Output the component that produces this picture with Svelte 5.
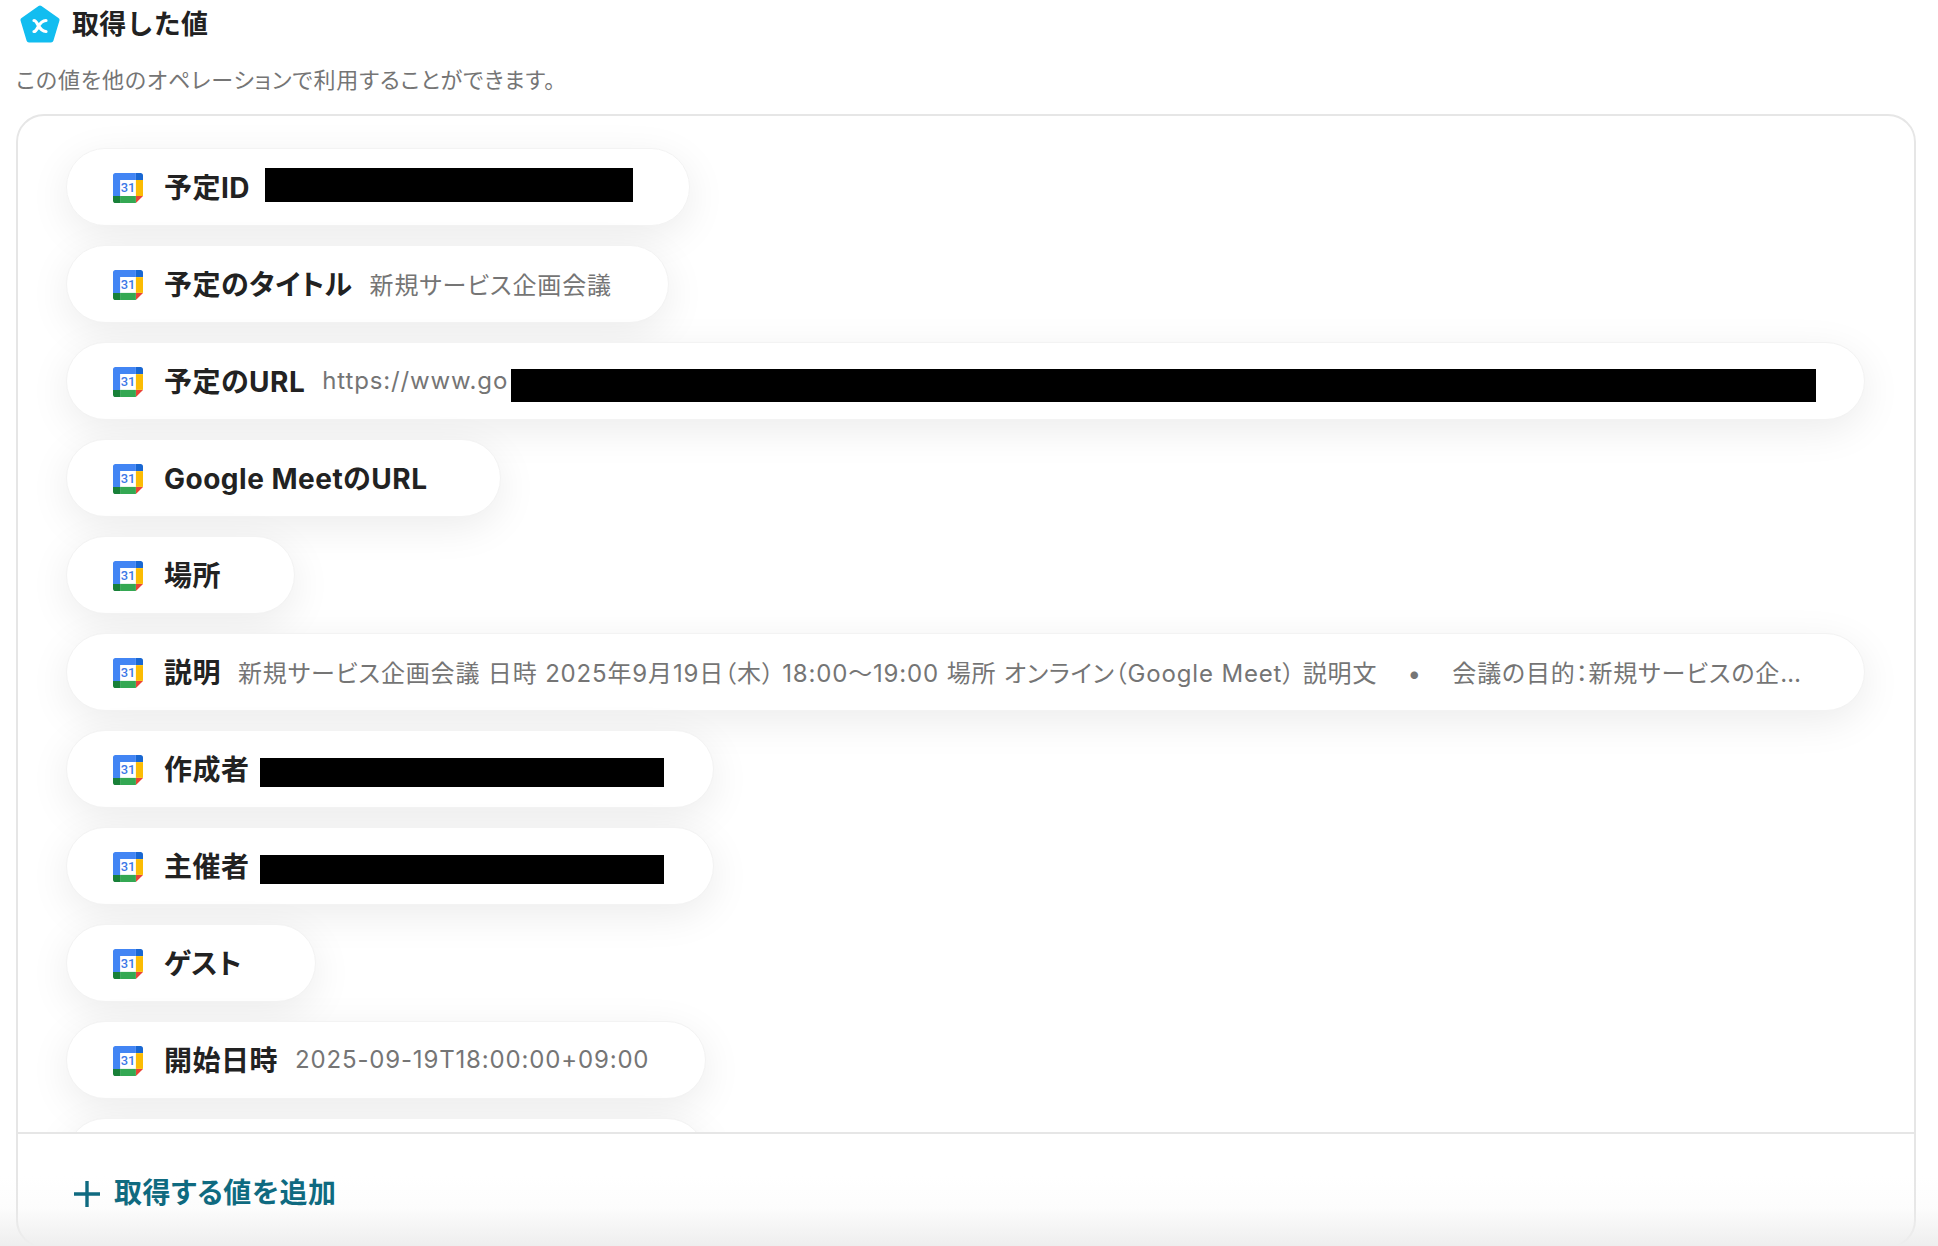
<script>
  const rows = [
    { label: '予定ID', mask: 'id' },
    { label: '予定のタイトル', value: '新規サービス企画会議' },
    { label: '予定のURL', value: 'https://www.go', mask: 'url', wide: true },
    { label: 'Google MeetのURL', value: '' },
    { label: '場所', value: '' },
    {
      label: '説明',
      value: '新規サービス企画会議 日時 2025年9月19日（木） 18:00〜19:00 場所 オンライン（Google Meet） 説明文 \u00a0\u00a0\u00a0•\u00a0\u00a0\u00a0 会議の目的：新規サービスの企画内容について検討し、今後の方向性を決定する',
      wide: true
    },
    { label: '作成者', mask: 'mail' },
    { label: '主催者', mask: 'mail' },
    { label: 'ゲスト', value: '' },
    { label: '開始日時', value: '2025-09-19T18:00:00+09:00' },
    { label: '終了日時', value: '2025-09-19T19:00:00+09:00' }
  ];
</script>

{#snippet calendar()}
  <svg class="cal" viewBox="0 0 200 200" aria-hidden="true">
    <path fill="#fff" d="M152.6 47.4H47.4v105.2h105.2z" />
    <path fill="#EA4335" d="M152.6 200L200 152.6h-47.4z" />
    <path fill="#FBBC04" d="M200 47.4h-47.4v105.2H200z" />
    <path fill="#34A853" d="M152.6 152.6H47.4V200h105.2z" />
    <path fill="#188038" d="M0 152.6v31.6C0 192.9 7.1 200 15.8 200h31.6v-47.4z" />
    <path fill="#1967D2" d="M200 47.4V15.8C200 7.1 192.9 0 184.2 0h-31.6v47.4z" />
    <path fill="#4285F4" d="M152.6 0H15.8C7.1 0 0 7.1 0 15.8v136.8h47.4V47.4h105.2z" />
    <text x="100" y="128" text-anchor="middle" class="cal-num">31</text>
  </svg>
{/snippet}

<div class="page">
  <header class="head">
    <svg class="logo" viewBox="0 0 40 38" aria-hidden="true">
      <path fill="#12bdf0" stroke="#12bdf0" stroke-width="5" stroke-linejoin="round" d="M20 3L37 15L31 35H9L3 15z" />
      <path fill="none" stroke="#fff" stroke-width="3.2" stroke-linecap="round" d="M14 15.5c4 0 4 11 12 11M26 15.5c-8 0-8 11-12 11" />
    </svg>
    <h1>取得した値</h1>
  </header>
  <p class="sub">この値を他のオペレーションで利用することができます。</p>

  <section class="card">
    <div class="list">
      {#each rows as r}
        <div class="pill" class:wide={r.wide}>
          {@render calendar()}
          <span class="label">{r.label}</span>
          {#if r.mask === 'url'}
            <span class="value url">{r.value}</span><i class="mask m-url"></i>
          {:else if r.mask}
            <i class="mask m-{r.mask}"></i>
          {:else}
            <span class="value">{r.value}</span>
          {/if}
        </div>
      {/each}
    </div>
    <div class="foot">
      <svg class="plus" viewBox="0 0 26 26" aria-hidden="true">
        <path d="M13 0v26M0 13h26" stroke="#0f6a80" stroke-width="3.4" fill="none" />
      </svg>
      <span>取得する値を追加</span>
    </div>
  </section>
  <div class="fade"></div>
</div>

<style>
  :global(body) { background: #fff; }
  .page {
    position: relative;
    height: 1246px;
    overflow: hidden;
    padding: 0 22px 0 16px;
    box-sizing: border-box;
    background: #fff;
    color: #222;
    font-family: Inter, "Noto Sans CJK JP", sans-serif;
    font-feature-settings: "palt";
  }
  .head { display: flex; align-items: center; gap: 12px; height: 48px; padding-left: 4px; }
  .logo { width: 40px; height: 38px; flex: none; }
  h1 { margin: 0; font-size: 27px; font-weight: 700; line-height: 1; font-feature-settings: normal; letter-spacing: .01em; }
  .sub { margin: 16px 0 0; height: 32px; font-size: 22px; line-height: 32px; letter-spacing: .85px; color: #757575; }
  .card {
    margin-top: 18px;
    height: 1134px;
    box-sizing: border-box;
    border: 2px solid #e6e6e6;
    border-radius: 28px;
    display: flex;
    flex-direction: column;
    overflow: hidden;
  }
  .list {
    height: 1018px;
    flex: none;
    box-sizing: border-box;
    padding: 32px 49px 0 48px;
    display: flex;
    flex-direction: column;
    align-items: flex-start;
    gap: 19px;
    overflow: hidden;
    border-bottom: 2px solid #e6e6e6;
  }
  .pill {
    flex: none;
    height: 78px;
    box-sizing: border-box;
    display: flex;
    align-items: center;
    gap: 17px;
    padding: 0 56px 0 46px;
    background: #fff;
    border-radius: 39px;
    border: 1px solid #f3f3f3;
    box-shadow: 0 10px 40px rgba(0, 0, 0, .08);
    max-width: 100%;
  }
  .pill.wide { width: 100%; padding-right: 60px; }
  .cal { width: 30px; height: 30px; flex: none; margin: 2px 4px 0 0; }
  .cal-num { font: 500 86px Roboto, sans-serif; fill: #3b78e7; }
  .label { flex: none; padding-bottom: 3px; font-size: 28px; font-weight: 700; letter-spacing: .5px; white-space: nowrap; }
  .value {
    min-width: 0;
    padding-bottom: 1px;
    font-size: 24px;
    color: #757575;
    letter-spacing: .035em;
    white-space: nowrap;
    overflow: hidden;
    text-overflow: ellipsis;
  }
  .value.url { flex: none; }
  .mask { display: block; flex: none; background: #000; }
  .m-id { width: 368px; height: 34px; margin: -4px 0 0 -2px; }
  .m-url { width: 1305px; height: 33px; margin: 8px 0 0 -14px; }
  .m-mail { width: 404px; height: 29px; margin: 6px -7px 0 -7px; }
  .foot {
    position: relative;
    z-index: 1;
    flex: 1;
    display: flex;
    align-items: flex-start;
    gap: 14px;
    padding: 44px 0 0 56px;
    font-size: 28px;
    font-weight: 700;
    letter-spacing: .6px;
    color: #0f6a80;
  }
  .plus { width: 26px; height: 26px; flex: none; margin-top: 3px; }
  .foot span { line-height: 30px; }
  .fade {
    position: absolute;
    left: 0;
    right: 0;
    bottom: 0;
    height: 70px;
    background: linear-gradient(to bottom, rgba(238, 238, 238, 0), rgba(238, 238, 238, .15) 45%, rgba(238, 238, 238, 1));
    pointer-events: none;
  }
</style>
